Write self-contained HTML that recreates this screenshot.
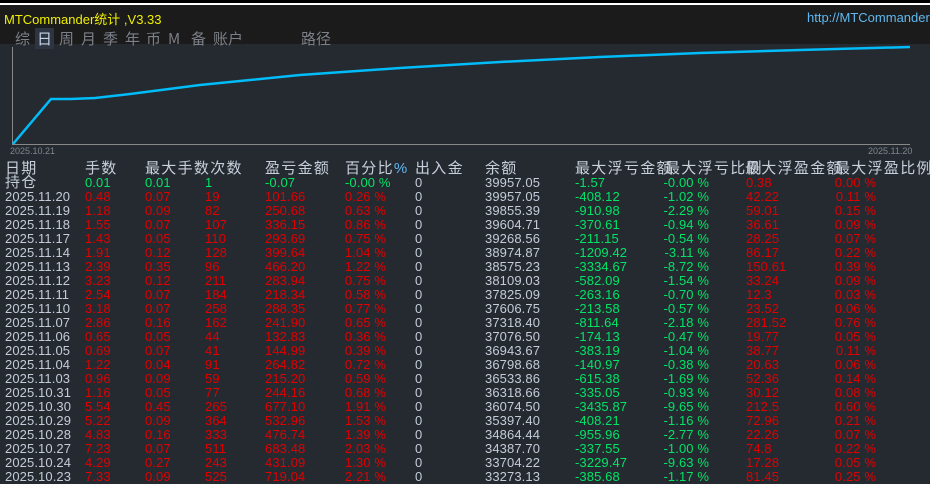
<!DOCTYPE html>
<html><head><meta charset="utf-8"><style>
*{margin:0;padding:0;box-sizing:border-box}
body{width:930px;height:484px;overflow:hidden;background:#252a31;font-family:"Liberation Sans","Noto Sans CJK SC",sans-serif;position:relative}
.top{position:absolute;left:0;top:0;width:930px;height:44px;background:#1b1b1b;border-top:3px solid #000}
.top:before{content:"";position:absolute;left:0;right:0;top:0;height:2px;background:#fff}
.title{position:absolute;left:4px;top:6px;color:#f0f000;font-size:13px}
.url{position:absolute;left:807px;top:7px;color:#5fb8f0;font-size:13px;white-space:nowrap}
.tabs{position:absolute;top:25px;left:15px;color:#7c8088;font-size:15px;font-family:"WenQuanYi Zen Hei","Noto Sans CJK SC",sans-serif}
.tabs span{position:absolute;white-space:nowrap}
.sel{background:#2d3442;color:#c8d4e4;padding:0 2px}
.r{position:absolute;left:0;width:930px;height:14px;font-size:13px;line-height:14px;white-space:nowrap;letter-spacing:0.1px}
.r span{position:absolute}
.h{font-size:15px;line-height:16px;letter-spacing:1.3px;color:#c8d0dc}
.g{color:#00e466}.d{color:#e00000}.w{color:#c4ccd8}
.rr{text-align:right}
.ax{position:absolute;color:#80868e;font-size:9px}
</style></head><body>
<div class="top"><div class="title">MTCommander统计 ,V3.33</div><div class="url">http://MTCommander</div>
<div class="tabs"><span style="left:0">综</span><span class="sel" style="left:20px">日</span><span style="left:44px">周</span><span style="left:66px">月</span><span style="left:88px">季</span><span style="left:110px">年</span><span style="left:131px">币</span><span style="left:153px">M</span><span style="left:176px">备</span><span style="left:198px">账户</span><span style="left:286px">路径</span></div></div>
<svg style="position:absolute;left:0;top:44px" width="930" height="110">
<line x1="12.5" y1="3" x2="12.5" y2="100" stroke="#888" stroke-width="1"/>
<line x1="12" y1="100.5" x2="910" y2="100.5" stroke="#888" stroke-width="1"/>
<polyline fill="none" stroke="#00bcf8" stroke-width="2.5" points="13,100 51,55 71,55 95,54 130,50 200,41 300,31 400,24 500,18 600,13 700,9 800,6 910,3"/>
</svg>
<div class="ax" style="left:10px;top:146px">2025.10.21</div>
<div class="ax" style="left:868px;top:146px">2025.11.20</div>
<div class="r h" style="top:161px;height:16px"><span style="left:5px">日期</span><span style="left:85px">手数</span><span style="left:145px">最大手数次数</span><span style="left:265px">盈亏金额</span><span style="left:345px">百分比<b style="font-weight:normal;color:#5fb8f0">%</b></span><span style="left:415px">出入金</span><span style="left:485px">余额</span><span style="left:575px">最大浮亏金额</span><span style="left:665px">最大浮亏比例</span><span style="left:745px">最大浮盈金额</span><span style="left:835px">最大浮盈比例</span></div>
<div class="r" style="top:176px"><span class="w h" style="left:5px;top:-1px">持仓</span><span class="g" style="left:85px">0.01</span><span class="g" style="left:145px">0.01</span><span class="g" style="left:205px">1</span><span class="g" style="left:265px">-0.07</span><span class="g" style="left:345px">-0.00 %</span><span class="w" style="left:415px">0</span><span class="w" style="left:485px">39957.05</span><span class="g" style="left:575px">-1.57</span><span class="g rr" style="right:221px">-0.00 %</span><span class="d" style="left:746px">0.38</span><span class="d rr" style="right:54px">0.00 %</span></div>
<div id="rows"></div>
<script>
var d=[["2025.11.20","0.48","0.07","19","101.66","0.26","39957.05","-408.12","-1.02","42.22","0.11"],
["2025.11.19","1.18","0.09","82","250.68","0.63","39855.39","-910.98","-2.29","59.01","0.15"],
["2025.11.18","1.55","0.07","107","336.15","0.86","39604.71","-370.61","-0.94","36.61","0.09"],
["2025.11.17","1.43","0.05","110","293.69","0.75","39268.56","-211.15","-0.54","28.25","0.07"],
["2025.11.14","1.91","0.12","128","399.64","1.04","38974.87","-1209.42","-3.11","86.17","0.22"],
["2025.11.13","2.39","0.35","96","466.20","1.22","38575.23","-3334.67","-8.72","150.61","0.39"],
["2025.11.12","3.23","0.12","211","283.94","0.75","38109.03","-582.09","-1.54","33.24","0.09"],
["2025.11.11","2.54","0.07","184","218.34","0.58","37825.09","-263.16","-0.70","12.3","0.03"],
["2025.11.10","3.18","0.07","258","288.35","0.77","37606.75","-213.58","-0.57","23.52","0.06"],
["2025.11.07","2.86","0.16","162","241.90","0.65","37318.40","-811.64","-2.18","281.52","0.76"],
["2025.11.06","0.65","0.05","44","132.83","0.36","37076.50","-174.13","-0.47","19.77","0.05"],
["2025.11.05","0.69","0.07","41","144.99","0.39","36943.67","-383.19","-1.04","38.77","0.11"],
["2025.11.04","1.22","0.04","91","264.82","0.72","36798.68","-140.97","-0.38","20.63","0.06"],
["2025.11.03","0.96","0.09","59","215.20","0.59","36533.86","-615.38","-1.69","52.36","0.14"],
["2025.10.31","1.16","0.05","77","244.16","0.68","36318.66","-335.05","-0.93","30.12","0.08"],
["2025.10.30","5.54","0.45","265","677.10","1.91","36074.50","-3435.87","-9.65","212.5","0.60"],
["2025.10.29","5.22","0.09","364","532.96","1.53","35397.40","-408.21","-1.16","72.96","0.21"],
["2025.10.28","4.83","0.16","333","476.74","1.39","34864.44","-955.96","-2.77","22.26","0.07"],
["2025.10.27","7.23","0.07","511","683.48","2.03","34387.70","-337.55","-1.00","74.8","0.22"],
["2025.10.24","4.29","0.27","243","431.09","1.30","33704.22","-3229.47","-9.63","17.28","0.05"],
["2025.10.23","7.33","0.09","525","719.04","2.21","33273.13","-385.68","-1.17","81.45","0.25"]];
var h="";d.forEach(function(r,i){var t=190+i*14;
h+='<div class="r" style="top:'+t+'px"><span class="w" style="left:5px">'+r[0]+'</span><span class="d" style="left:85px">'+r[1]+'</span><span class="d" style="left:145px">'+r[2]+'</span><span class="d" style="left:205px">'+r[3]+'</span><span class="d" style="left:265px">'+r[4]+'</span><span class="d rr" style="right:544px">'+r[5]+' %</span><span class="w" style="left:415px">0</span><span class="w" style="left:485px">'+r[6]+'</span><span class="g" style="left:575px">'+r[7]+'</span><span class="g rr" style="right:221px">'+r[8]+' %</span><span class="d" style="left:746px">'+r[9]+'</span><span class="d rr" style="right:54px">'+r[10]+' %</span></div>';});
document.getElementById("rows").innerHTML=h;
</script>
</body></html>
